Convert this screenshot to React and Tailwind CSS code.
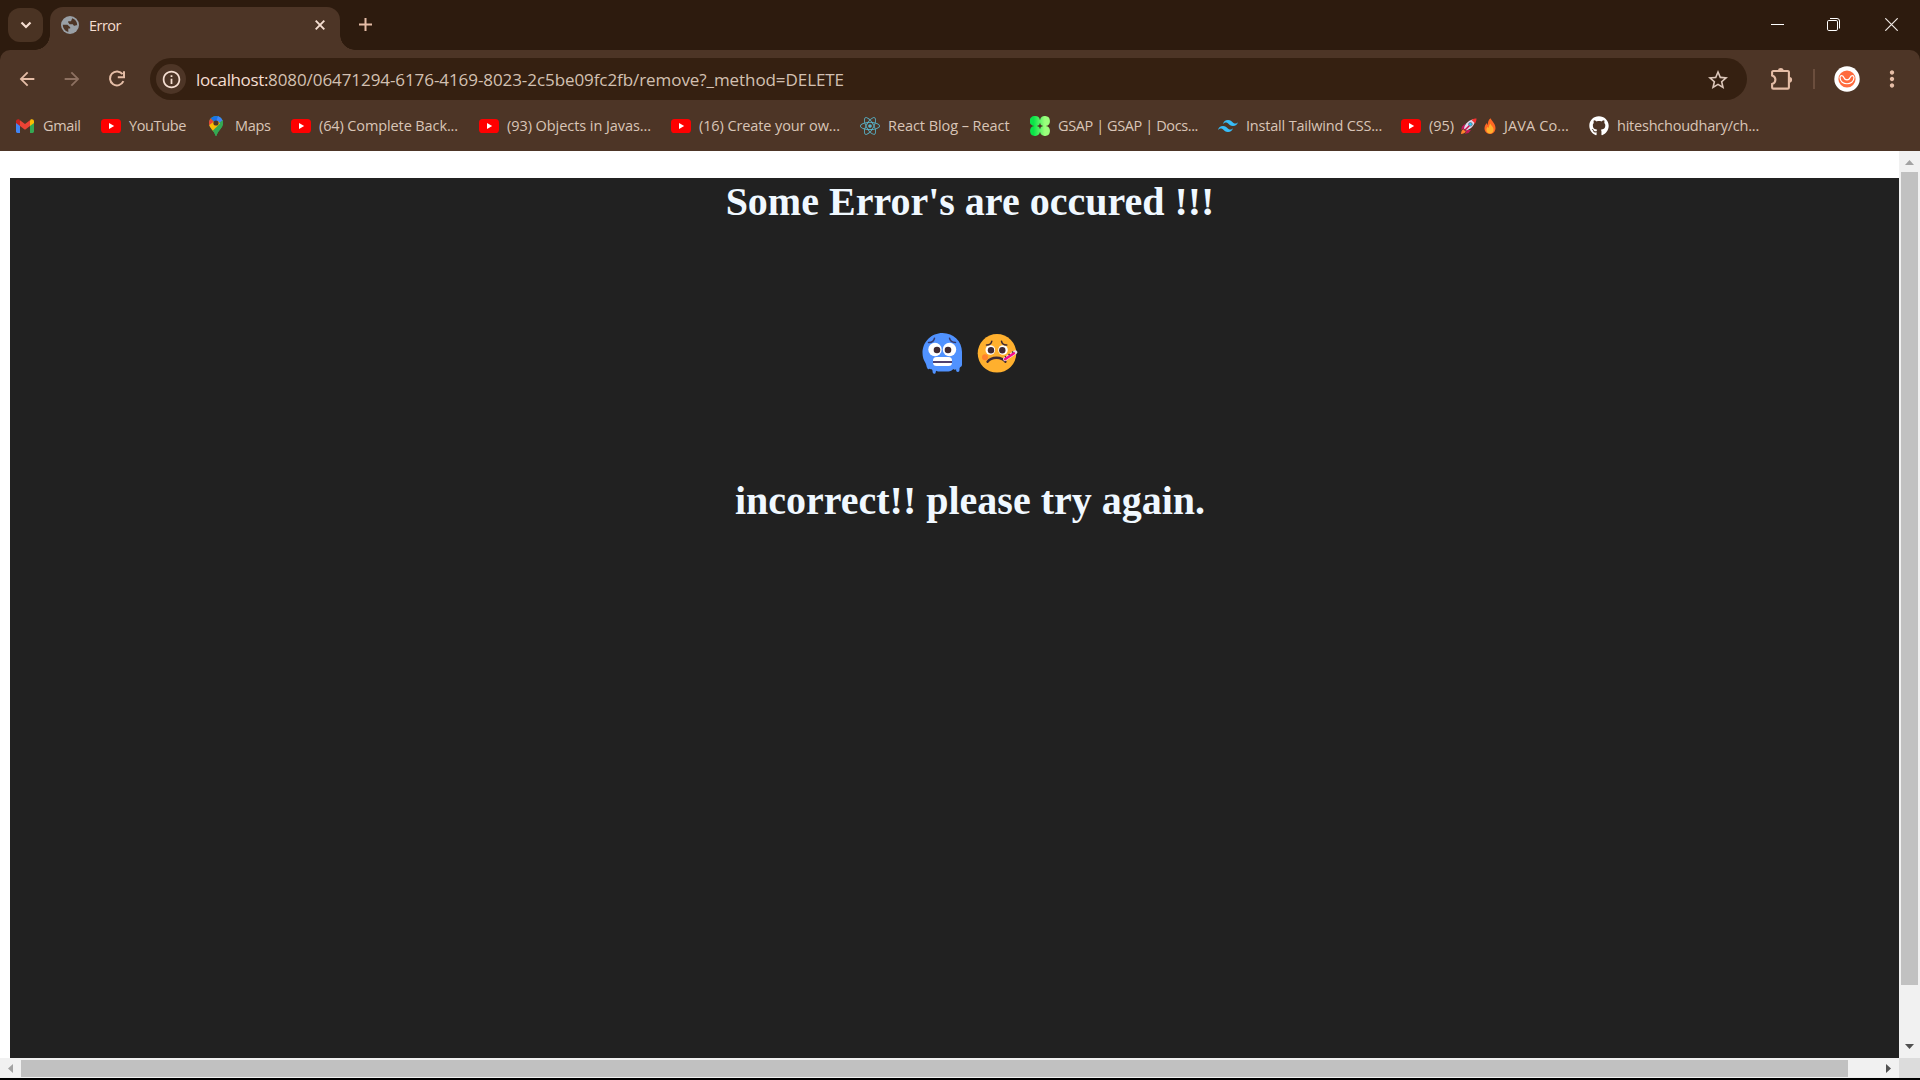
import React, { useLayoutEffect, useRef } from "react";
import { MdArrowBack, MdArrowForward, MdStarOutline, MdInfoOutline, MdMoreVert } from "react-icons/md";
import { FaGithub, FaReact } from "react-icons/fa";
import { SiTailwindcss } from "react-icons/si";

/* Text set to a given pixel width by adjusting its tracking. */
function Fit({ width, className = "", children }) {
  const ref = useRef(null);
  useLayoutEffect(() => {
    const el = ref.current;
    const apply = () => {
      el.style.letterSpacing = "0px";
      const natural = el.getBoundingClientRect().width;
      el.style.letterSpacing = `${(width - natural) / el.textContent.length}px`;
    };
    apply();
    document.fonts?.ready.then(apply);
  }, [width]);
  return <span ref={ref} className={`inline-block whitespace-pre ${className}`}>{children}</span>;
}

const Globe = () => (
  <svg className="mt-[9px] ml-[11px]" width="18" height="18" viewBox="0 0 18 18">
    <circle cx="9" cy="9" r="9" fill="#9aa0a6" />
    <path d="M1.800 8.800H6.500L9.200 11.300V12.600H7.300V16C4 15.200 1.800 12.300 1.800 8.800z" fill="#4d3526" />
    <path d="M11.200 2.200C14.200 3.200 16.200 5.800 16.200 9.200c-1.500-.2-2.400.9-3.300.5L11.800 8.200H8.600L7.200 6.600V5.200H10z" fill="#4d3526" />
  </svg>
);

const Reload = () => (
  <svg className="ml-[25px]" width="18" height="18" viewBox="0 0 18 18" fill="none">
    <path d="M14.600 4.200A7 7 0 1 0 15.400 11.200" stroke="#e5bda6" strokeWidth="2" />
    <path d="M16 1.200V7.300H9.800" stroke="#e5bda6" strokeWidth="2" />
  </svg>
);

const YouTube = () => (
  <svg width="20" height="20" viewBox="0 0 20 20">
    <rect x="0" y="3" width="20" height="14" rx="3.6" fill="#f00" />
    <path d="M8 7l5.2 3L8 13z" fill="#fff" />
  </svg>
);

const Gmail = () => (
  <svg width="20" height="20" viewBox="0 0 20 20">
    <path d="M1 5v10.6c0 .8.6 1.4 1.4 1.4H5V8z" fill="#4285f4" />
    <path d="M19 5v10.6c0 .8-.6 1.4-1.4 1.4H15V8z" fill="#34a853" />
    <path d="M15 5v5l4-3V5.300c0-2-2.100-2.600-3.400-1.700z" fill="#fbbc04" />
    <path d="M1 5.300V7l4 3V5l-.6-1.400C3 2.700 1 3.500 1 5.300z" fill="#c5221f" />
    <path d="M5 10V4.200L10 8l5-3.800V10l-5 3.800z" fill="#ea4335" />
  </svg>
);

const MapsPin = () => (
  <svg width="20" height="20" viewBox="0 0 20 20">
    <defs>
      <clipPath id="pin"><path d="M9 0C5 0 2 3.100 2 7c0 2.600 1.200 4.400 3.100 6.700C7 16 7.800 17.500 8.300 19.200c.2.800 1.200.8 1.400 0 .5-1.700 1.300-3.200 3.200-5.500C14.800 11.400 16 9.600 16 7c0-3.900-3-7-7-7z" /></clipPath>
    </defs>
    <g clipPath="url(#pin)">
      <path d="M0 0h20v20H0z" fill="#34a853" />
      <path d="M3.300 2L9 7l5-6-5-2z" fill="#1a73e8" />
      <path d="M3.600 2.300L0 3v6l3 1.500L7 6z" fill="#ea4335" />
      <path d="M16 4L3.600 19 0 10.600 7 5.500z" fill="#fbbc04" />
      <path d="M11 0h6v3.700L11 9.500 9 6z" fill="#4285f4" />
      <path d="M16.200 3.500L4.400 13.200 8 20h9z" fill="#34a853" />
      <path d="M4.400 13.200L11 5l2 2.500-7.300 7.300z" fill="#fbbc04" />
    </g>
    <circle cx="9" cy="7" r="2.600" fill="#4d3526" />
  </svg>
);

const Gsap = () => (
  <svg width="20" height="20" viewBox="0 0 20 20">
    <defs><linearGradient id="gs" x1="0" x2="1"><stop offset=".2" stopColor="#0ae448" /><stop offset=".75" stopColor="#9bff7c" /></linearGradient></defs>
    <g fill="url(#gs)">
      <path d="M5 0a5 5 0 0 1 5 4.200A5 5 0 1 1 15.800 10 5 5 0 1 1 10 15.800 5 5 0 1 1 4.200 10 5 5 0 0 1 5 0z" />
    </g>
    <path d="M10 6.800l.9 2.300 2.300.9-2.300.9-.9 2.300-.9-2.300L6.800 10l2.300-.9z" fill="#4d3526" />
  </svg>
);

const Rocket = () => (
  <svg width="18" height="18" viewBox="0 0 18 18">
    <path d="M5 7L2 9.500 1.200 13 5 11zM11 13l-2.500 3L5 16.800 7 13z" fill="#c2185b" />
    <path d="M3.500 12.200C1.700 12.800 1.200 15 1 17c2-.2 4.200-.7 4.800-2.500z" fill="#ff822d" />
    <path d="M4 11.500C5 6 9.500 2.500 15 2c.3 5.500-3.500 10-9 11.500z" fill="#e1d8ec" />
    <path d="M11.500 2.900C13 2 15 1.500 16.500 1.500c0 1.500-.5 3.500-1.400 5z" fill="#f8312f" />
    <circle cx="10.400" cy="7.300" r="1.800" fill="#26c9fc" stroke="#636363" strokeWidth=".7" />
    <path d="M9 9l-4 4" stroke="#ca0b4a" strokeWidth="1.500" strokeLinecap="round" />
  </svg>
);

const Flame = () => (
  <svg width="18" height="18" viewBox="0 0 18 18">
    <path d="M9.600 1.200c.5 2.200 4.900 5 4.900 9.800 0 3.400-2.300 6-5.500 6s-5.500-2.500-5.500-5.700c0-2.300 1.100-4.500 2.500-5.400 0 .9.300 1.600.9 2C6.700 5.500 7.400 2.500 9.600 1.200z" fill="#ff6723" />
    <path d="M9.500 6.500c.3 2 3.100 3.200 3.100 6.200 0 2.200-1.500 3.800-3.600 3.800s-3.600-1.500-3.600-3.600c0-1.300.6-2.500 1.600-3.100 0 .7.300 1 .7 1.100C7.900 9.200 8.300 7.500 9.500 6.500z" fill="#ffb02e" />
  </svg>
);

const ColdFace = () => (
  <svg width="42" height="44" viewBox="0 0 42 44">
    <path d="M21.500 1C32.500 1 41 9.500 41 20v12.500c0 1.300-.5 2-1.200 2.200-1 .6-1.300 1.300-1.300 2.200v1.200c0 1.200-.6 2-1.700 2s-1.700-.8-1.700-2v-.8c-.8.700-2.300.4-2.900-.3-.9 1.600-3 2.500-4.800 2.500H17.500c-.9 0-1.600-.5-2-.8-.6.500-.8 1-.8 1.600 0 1-.7 1.500-1.500 1.500s-1.600-.8-1.600-2c0-2.200-.7-2.600-1.700-2.600-.9 0-1.300-.6-1.700-.2-.6.500-1.900.3-2.100-1.400C5.800 36 5.500 33 4.500 31 2.700 28 1.500 25 1.500 21 1.500 9.700 10.500 1 21.500 1z" fill="#5092ff" />
    <circle cx="14" cy="17.500" r="6.700" fill="#fff" /><circle cx="28.500" cy="17.500" r="6.700" fill="#fff" />
    <circle cx="16" cy="18" r="3.300" fill="#402a32" /><circle cx="27" cy="18" r="3.300" fill="#402a32" />
    <path d="M7.500 10.500c3 .1 5.500-1.300 6-4.300M28.500 6.200c.5 2.700 3 4.300 6 4.300" fill="none" stroke="#34386b" strokeWidth="1.500" strokeLinecap="round" />
    <rect x="12" y="25" width="19" height="9" rx="3.500" fill="#fff" />
    <path d="M12 30h19" stroke="#50406e" strokeWidth="2" />
  </svg>
);

const SickFace = () => (
  <svg width="42" height="44" viewBox="0 0 42 44">
    <circle cx="21" cy="21.300" r="19.300" fill="#ffb02e" />
    <circle cx="9" cy="25.200" r="3" fill="#ff822d" />
    <circle cx="14.300" cy="18" r="4.800" fill="#fff" /><circle cx="27" cy="18" r="4.800" fill="#fff" />
    <circle cx="15" cy="18.300" r="3.200" fill="#402a32" /><circle cx="26.300" cy="18.300" r="3.200" fill="#402a32" />
    <path d="M10.500 13c2.800.1 4.800-1.200 5.300-3.800M25.500 9.200c.4 2.500 2.500 3.900 5.300 3.800" fill="none" stroke="#402a32" strokeWidth="1.500" strokeLinecap="round" />
    <path d="M11.500 29.800c4-5.400 14-5.400 18 0" fill="none" stroke="#402a32" strokeWidth="2.300" strokeLinecap="round" />
    <path d="M29 27.200L39.400 20.200" stroke="#e9dce6" strokeWidth="3.800" strokeLinecap="round" />
    <path d="M29 27.200l9-6" stroke="#f70a8d" strokeWidth="2.400" strokeLinecap="round" />
    <path d="M29 24.300l.9 1.100M32.600 21.900l.9 1.100M36.200 19.500l.9 1.100" stroke="#402a32" strokeWidth="1.400" />
  </svg>
);

const Avatar = () => (
  <svg width="26" height="26" viewBox="0 0 26 26">
    <circle cx="13" cy="13" r="12.700" fill="#fff" />
    <circle cx="13" cy="13" r="8.600" fill="#ff6b3d" />
    <path d="M6 11.500c.3-2.500 3-2.500 4 .3 1 2.800 5 2.800 6 0 1-2.800 3.700-2.800 4-.3 0 8.300-14 8.300-14 0z" fill="none" stroke="#fff" strokeWidth="1.200" />
  </svg>
);

const Puzzle = () => (
  <svg width="24" height="24" viewBox="0 0 24 24" fill="none">
    <path d="M3.500 4H17.700a1.200 1.200 0 0 1 1.200 1.200V20.400a1.200 1.200 0 0 1-1.200 1.200H3.300a1.200 1.200 0 0 1-1.200-1.200V17c2-.6 3.300-2.200 3.300-4.200S4 9.200 2.100 8.600V5.200A1.200 1.200 0 0 1 3.500 4z" stroke="#e5bda6" strokeWidth="2.100" />
    <path d="M8 3.500a2.800 2.600 0 0 1 5.600 0zM19.500 10a2.600 2.800 0 0 1 0 5.600z" fill="#e5bda6" />
  </svg>
);

const bookmarks = [
  { icon: <Gmail />, label: "Gmail", item: "w-[86px]", width: 37.5 },
  { icon: <YouTube />, label: "YouTube", item: "w-[106px]", width: 57 },
  { icon: <MapsPin />, label: "Maps", item: "w-[84px]", width: 35.5 },
  { icon: <YouTube />, label: "(64) Complete Back...", item: "w-[188px]", width: 139 },
  { icon: <YouTube />, label: "(93) Objects in Javas...", item: "w-[192px]", width: 144 },
  { icon: <YouTube />, label: "(16) Create your ow...", item: "w-[189px]", width: 141 },
  { icon: <FaReact size={20} color="#58b3c9" />, label: "React Blog – React", item: "w-[170px]", width: 121.5 },
  { icon: <Gsap />, label: "GSAP | GSAP | Docs...", item: "w-[188px]", width: 140 },
  { icon: <SiTailwindcss size={20} color="#38bdf8" />, label: "Install Tailwind CSS...", item: "w-[183px]", width: 136 },
  { icon: <YouTube />, java: true, item: "w-[188px]" },
  { icon: <FaGithub size={20} color="#fff" />, label: "hiteshchoudhary/ch...", item: "w-[171px]", width: 142 },
];

export default function App() {
  return (
    <div className="flex h-[1080px] w-[1920px] flex-col overflow-hidden bg-[#2d1b0e] font-['Open_Sans',sans-serif]">
      <header className="flex h-[50px] shrink-0 items-start">
        <button className="mt-2 ml-2 flex h-[34px] w-[35px] items-center justify-center rounded-[12px] bg-[#4a3323]">
          <svg width="12" height="8" viewBox="0 0 12 8"><path d="M1.500 1.500L6 6l4.500-4.500" fill="none" stroke="#f5ded1" strokeWidth="2.200" /></svg>
        </button>
        <div className="relative mt-[7px] ml-[7px] flex h-[43px] w-[290px] rounded-t-[13px] bg-[#4d3526]">
          <span className="absolute bottom-0 -left-[15px] size-[15px] bg-[radial-gradient(circle_at_0_0,transparent_14.500px,#4d3526_15px)]" />
          <span className="absolute -right-[15px] bottom-0 size-[15px] bg-[radial-gradient(circle_at_100%_0,transparent_14.500px,#4d3526_15px)]" />
          <Globe />
          <Fit width={32} className="mt-[8px] ml-[10px] text-[14.500px] leading-[22px] text-[#f5ded1]">Error</Fit>
          <svg className="mt-[13px] mr-[15px] ml-auto" width="10" height="10" viewBox="0 0 10 10"><path d="M.7.7l8.600 8.600M9.300.7L.7 9.300" stroke="#f5ded1" strokeWidth="1.900" /></svg>
        </div>
        <svg className="mt-[18px] ml-[19px]" width="13" height="13" viewBox="0 0 13 13"><path d="M6.500 0v13M0 6.500h13" stroke="#e5bda6" strokeWidth="2" /></svg>
        <div className="mt-[18px] mr-[22px] ml-auto flex">
          <svg width="13" height="13" viewBox="0 0 13 13"><path d="M0 6.500h13" stroke="#fff" /></svg>
          <svg className="ml-[43px]" width="13" height="13" viewBox="0 0 13 13" fill="none" stroke="#fff"><rect x=".5" y="2.500" width="10" height="10" rx="1.300" /><path d="M3 .5h7A2.500 2.500 0 0 1 12.500 3v7.500" /></svg>
          <svg className="ml-[45px]" width="13" height="13" viewBox="0 0 13 13"><path d="M.3.3l12.400 12.400M12.700.3L.3 12.700" stroke="#f0e9e4" strokeWidth="1.200" /></svg>
        </div>
      </header>

      <div className="h-[101px] shrink-0 rounded-t-[10px] bg-[#4d3526]">
        <div className="flex h-[58px] items-center">
          <MdArrowBack size={22} color="#e5bda6" className="ml-[16px]" />
          <MdArrowForward size={22} color="#8d7060" className="ml-[23px]" />
          <Reload />
          <div className="ml-[24px] flex h-[42px] w-[1597px] items-center rounded-full bg-[#352011] text-[17px]">
            <span className="ml-[6px] flex size-[30px] items-center justify-center rounded-full bg-[#4d3526]">
              <MdInfoOutline size={21} color="#f5ded1" />
            </span>
            <Fit width={72} className="mt-px ml-[10px] text-[#f5ded1]">localhost:</Fit>
            <Fit width={576} className="mt-px text-[#d3c0b2]">8080/06471294-6176-4169-8023-2c5be09fc2fb/remove?_method=DELETE</Fit>
            <MdStarOutline size={24} color="#dcc6b9" className="mt-px mr-[17px] ml-auto" />
          </div>
          <div className="ml-[23px]"><Puzzle /></div>
          <span className="ml-[19px] h-5 w-[2px] bg-[#6b4e3d]" />
          <div className="ml-[19px]"><Avatar /></div>
          <MdMoreVert size={26} color="#e5bda6" className="ml-[19px]" />
        </div>
        <nav className="flex h-[34px] items-center pl-[15px] text-[14.500px] leading-5 text-[#d9c5b7]">
          {bookmarks.map((b, i) => (
            <div key={i} className={`flex shrink-0 items-center gap-2 ${b.item}`}>
              <span className="mt-px flex size-5 shrink-0 items-center justify-center">{b.icon}</span>
              {b.java ? (
                <span className="mt-px flex items-center">
                  <Fit width={25}>(95)</Fit>
                  <span className="ml-[6px]"><Rocket /></span>
                  <span className="ml-[3px]"><Flame /></span>
                  <Fit width={65} className="ml-[5px]">JAVA Co...</Fit>
                </span>
              ) : (
                <Fit width={b.width} className="mt-px">{b.label}</Fit>
              )}
            </div>
          ))}
        </nav>
      </div>

      <div className="grid h-[927px] shrink-0 grid-cols-[1899px_21px] grid-rows-[907px_20px] bg-white">
        <main className="overflow-hidden pt-[27px] pl-[10px]">
          <div className="flex h-[900px] w-[1920px] flex-col items-center bg-[#212121] pt-px font-['Liberation_Serif',serif] text-[40px] leading-[46px] font-bold text-[#f0f8ff]">
            <h1>Some Error&apos;s are occured !!!</h1>
            <div className="mt-[107px] mr-[2px] flex h-[46px] gap-[13px]"><ColdFace /><SickFace /></div>
            <h1 className="mt-[100px]">incorrect!! please try again.</h1>
          </div>
        </main>
        <div className="flex flex-col items-center bg-[#f1f1f1]">
          <svg className="mt-[9px]" width="9" height="5" viewBox="0 0 9 5"><path d="M0 5L4.500 0 9 5z" fill="#a3a3a3" /></svg>
          <div className="mt-[7px] h-[813px] w-[17px] bg-[#c1c1c1]" />
          <svg className="mt-[59px]" width="9" height="5" viewBox="0 0 9 5"><path d="M0 0h9L4.500 5z" fill="#505050" /></svg>
        </div>
        <div className="flex items-center bg-[#f1f1f1]">
          <svg className="ml-[8px]" width="5" height="9" viewBox="0 0 5 9"><path d="M5 0v9L0 4.500z" fill="#a3a3a3" /></svg>
          <div className="ml-[8px] h-[17px] w-[1827px] bg-[#c1c1c1]" />
          <svg className="ml-[38px]" width="5" height="9" viewBox="0 0 5 9"><path d="M0 0v9l5-4.500z" fill="#505050" /></svg>
        </div>
        <div className="bg-[#dcdcdc]" />
      </div>
      <div className="h-[2px] shrink-0 bg-black" />
    </div>
  );
}
